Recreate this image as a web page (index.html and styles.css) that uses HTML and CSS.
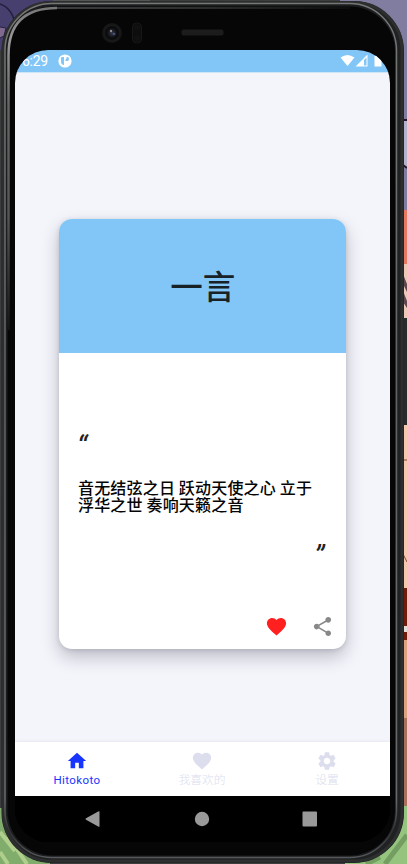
FILE: index.html
```html
<!DOCTYPE html>
<html lang="zh-CN">
<head>
<meta charset="utf-8">
<title>Hitokoto</title>
<link rel="stylesheet" href="styles.css">
</head>
<body>
<svg class="backdrop" width="407" height="864" viewBox="0 0 407 864" aria-hidden="true">
  <defs>
    <linearGradient id="rim" x1="0" y1="0" x2="0" y2="1">
      <stop offset="0" stop-color="#777"/><stop offset=".45" stop-color="#606364"/><stop offset=".93" stop-color="#686a6b"/><stop offset=".97" stop-color="#303133"/><stop offset="1" stop-color="#56585b"/>
    </linearGradient>
    <linearGradient id="shine" x1="0" y1="0" x2="0" y2="1">
      <stop offset="0" stop-color="#777"/><stop offset=".1" stop-color="#999"/><stop offset=".3" stop-color="#666"/><stop offset=".65" stop-color="#555"/><stop offset="1" stop-color="#151515"/>
    </linearGradient>
    <linearGradient id="top-shine" gradientUnits="userSpaceOnUse" x1="50" y1="0" x2="350" y2="0">
      <stop offset="0" stop-color="#777"/><stop offset=".5" stop-color="#555"/><stop offset="1" stop-color="#151515"/>
    </linearGradient>
    <radialGradient id="lens"><stop offset="0" stop-color="#34394b"/><stop offset=".35" stop-color="#18191e"/><stop offset=".6" stop-color="#080808"/><stop offset=".75" stop-color="#18191a"/><stop offset="1" stop-color="#141415"/></radialGradient>
  </defs>
  <rect width="407" height="864" fill="#3b3d3e"/>
  <path d="M0 0H53V50H0Z" fill="#47406f"/>
  <path d="M0 4C9 7 14 14 16 28" fill="none" stroke="#211f3b" stroke-width="1.5"/>
  <path d="M0 27L6 28L4 36L0 38" fill="#80698e" stroke="#25213c"/>
  <path d="M53 0H150V3H53Z" fill="#555"/>
  <path d="M340 0H407V210H340Z" fill="#817da0"/>
  <path d="M403 119H407V168L403 164Z" fill="#b3b1cc"/>
  <path d="M403 120H407M403 165L407 168" stroke="#29152a" stroke-width="2"/>
  <path d="M403 210H407V264H403Z" fill="#e77962"/>
  <path d="M403 264H407V318H403Z" fill="#efc7b6"/>
  <path d="M403 274L407 284V292L403 284ZM403 291L407 301V308L403 302Z" fill="#60464f"/>
  <path d="M403 318H407V425H403Z" fill="#292b2b"/>
  <path d="M403 425H407V588H403Z" fill="#f4c9ad"/>
  <path d="M403 460H407M403 554L407 562" stroke="#8b4538"/>
  <path d="M403 588H407V640H403Z" fill="#711d0b"/>
  <path d="M403 626H407V632H403Z" fill="#e7ddd8"/>
  <path d="M403 640H407V718H403Z" fill="#dda080"/>
  <path d="M403 718H407V807H403Z" fill="#a8715d"/>
  <path d="M0 808H50V864H0Z" fill="#80ad6c"/>
  <path d="M0 832L15 851M8 836L27 864M0 852L8 864" stroke="#b1cf8c" stroke-width="4"/>
  <path d="M345 806H407V864H345Z" fill="#94c47e"/>
  <path d="M385 864L407 835M366 864L380 857" stroke="#739d61" stroke-width="5"/>
  <rect x="1.500" y="1" width="402.500" height="862" rx="50" fill="#202122"/>
  <rect x="3.500" y="2.500" width="398.500" height="858.500" rx="48" fill="none" stroke="#2d2f2f" stroke-width="3"/>
  <rect x="5" y="3.500" width="391.500" height="854" rx="47" fill="#1b1c1e" stroke="url(#rim)" stroke-width="1.500"/>
  <rect x="7.500" y="6.500" width="387.500" height="849" rx="45" fill="#070607"/>
  <path d="M8.500 330V55Q8.500 8 57 8" fill="none" stroke="url(#shine)" stroke-width="2.500"/>
  <path d="M57 7.500H350V8.500H57Z" fill="url(#top-shine)"/>
  <circle cx="112" cy="33" r="10" fill="url(#lens)"/>
  <circle cx="111" cy="31" r="1.200" fill="#8c8e93"/><circle cx="114" cy="34" r="1.300" fill="#46527d"/>
  <rect x="132.500" y="23" width="9" height="20" rx="4" fill="#0d0d0e" stroke="#171717"/>
  <circle cx="137" cy="27.500" r="3" fill="#111"/><circle cx="137" cy="38" r="3" fill="#111"/>
  <rect x="181.500" y="29.500" width="42" height="6" rx="2" fill="#1c1c1d"/>
</svg>

<main class="screen">
  <header class="status">
    <span class="clock">6:29</span>
    <svg class="app-mark" viewBox="0 0 14 14"><circle cx="7" cy="7" r="6.600" fill="#fff"/><path d="M4.300 3H6V11H5.500Q3 10.500 3 8V4.300Q3 3 4.300 3ZM8.500 3H9.200Q11 3.200 11 5T9.200 7H7.500V5.500Q9 5.200 8.500 3Z" fill="#81c6f7"/></svg>
    <span class="grow"></span>
    <svg class="signals" width="50" height="14" viewBox="0 0 50 14" fill="#fff"><path d="M.5 3.400Q7.500-1.600 14.500 3.400L7.500 12Z"/><path fill-rule="evenodd" d="M27.500.5V12.500H15.500ZM26.500 3.500L24 6V11.500H26.500Z"/><path d="M34.500 2H36V.5H40V2H41.500V12.500H34.500Z"/></svg>
  </header>

  <section class="content">
    <article class="card">
      <h1 class="card-title">一言</h1>
      <div class="card-body">
        <div class="quote-open">“</div>
        <p class="sentence">音无结弦之日 跃动天使之心 立于<br>浮华之世 奏响天籁之音</p>
        <div class="quote-close">”</div>
        <div class="actions">
          <svg width="23" height="23" viewBox="0 0 24 24" fill="#ff201f"><path d="M12 21.350l-1.450-1.320C5.400 15.360 2 12.280 2 8.500 2 5.420 4.420 3 7.500 3c1.740 0 3.410.81 4.500 2.090C13.090 3.810 14.760 3 16.500 3 19.580 3 22 5.420 22 8.500c0 3.780-3.400 6.860-8.550 11.540z"/></svg>
          <svg width="23" height="23" viewBox="0 0 24 24" fill="#888"><path d="M18 16.080c-.76 0-1.440.3-1.960.77L8.910 12.700c.05-.23.09-.46.09-.7s-.04-.47-.09-.7l7.050-4.110c.54.5 1.250.81 2.040.81 1.660 0 3-1.340 3-3s-1.340-3-3-3-3 1.340-3 3c0 .24.040.47.090.7L8.040 9.810C7.500 9.310 6.790 9 6 9c-1.660 0-3 1.340-3 3s1.340 3 3 3c.79 0 1.500-.31 2.040-.81l7.120 4.160c-.05.21-.08.43-.08.65 0 1.610 1.310 2.920 2.920 2.920s2.920-1.310 2.920-2.920-1.310-2.920-2.920-2.920z"/></svg>
        </div>
      </div>
    </article>
  </section>

  <nav class="tabs">
    <div class="tab active">
      <svg viewBox="0 0 24 24"><path d="M10 20v-6h4v6h5v-8h3L12 3 2 12h3v8z"/></svg>
      <span>Hitokoto</span>
    </div>
    <div class="tab">
      <svg viewBox="0 0 24 24"><path d="M12 21.350l-1.450-1.320C5.400 15.360 2 12.280 2 8.500 2 5.420 4.420 3 7.500 3c1.740 0 3.410.81 4.500 2.090C13.090 3.810 14.760 3 16.500 3 19.580 3 22 5.420 22 8.500c0 3.780-3.400 6.860-8.550 11.540z"/></svg>
      <span>我喜欢的</span>
    </div>
    <div class="tab">
      <svg viewBox="0 0 24 24"><path d="M19.140 12.940c.04-.3.060-.61.060-.94 0-.32-.02-.64-.07-.94l2.030-1.580c.18-.14.23-.41.12-.61l-1.920-3.320c-.12-.22-.37-.29-.59-.22l-2.390.96c-.5-.38-1.030-.7-1.620-.94l-.36-2.540c-.04-.24-.24-.41-.48-.41h-3.840c-.24 0-.43.17-.47.41l-.36 2.540c-.59.24-1.130.57-1.620.94l-2.390-.96c-.22-.08-.47 0-.59.22L2.740 8.870c-.12.21-.08.47.12.61l2.030 1.580c-.05.3-.09.63-.09.94s.02.64.07.94l-2.030 1.580c-.18.14-.23.41-.12.61l1.920 3.320c.12.22.37.29.59.22l2.390-.96c.5.38 1.030.7 1.620.94l.36 2.540c.05.24.24.41.48.41h3.840c.24 0 .44-.17.47-.41l.36-2.540c.59-.24 1.130-.56 1.620-.94l2.390.96c.22.08.47 0 .59-.22l1.920-3.320c.12-.22.07-.47-.12-.61l-2.010-1.580zM12 15.600c-1.980 0-3.600-1.620-3.600-3.600s1.620-3.600 3.600-3.600 3.600 1.620 3.600 3.600-1.620 3.600-3.600 3.600z"/></svg>
      <span>设置</span>
    </div>
  </nav>

  <footer class="system-nav">
    <svg viewBox="0 0 16 16"><path d="M14.500.5V15.500Q14 16.200 13.200 15.500L1 8.700Q0 8 1 7.300L13.200.5Q14 0 14.500.5Z"/></svg>
    <svg viewBox="0 0 16 16"><circle cx="8" cy="8" r="7.200"/></svg>
    <svg viewBox="0 0 16 16"><rect x=".5" y=".6" width="14.500" height="14.800" rx="1"/></svg>
  </footer>
</main>
</body>
</html>
```

FILE: styles.css
```css
* { box-sizing: border-box; }
body {
  margin: 0;
  width: 407px;
  height: 864px;
  padding: 50px 17px 22px 15px;
  overflow: hidden;
  font-family: Roboto, "Noto Sans CJK SC", sans-serif;
}
.backdrop { position: absolute; inset: 0; z-index: -1; }
.screen {
  height: 792px;
  display: flex;
  flex-direction: column;
  overflow: hidden;
  border-radius: 33px;
  background: #000;
}
.status {
  height: 22px;
  flex: none;
  display: flex;
  align-items: center;
  padding-left: 7px;
  background: #81c6f7;
  color: #fff;
}
.clock { width: 36px; font-size: 14px; letter-spacing: -.3px; line-height: 22px; }
.app-mark { width: 14px; height: 14px; }
.grow { flex: 1; }
.content {
  height: 670px;
  flex: none;
  padding: 146px 44px 0;
  border-top: 1px solid #cfe5f8;
  background: #f4f5fb;
}
.card {
  height: 430px;
  width: 286.5px;
  border-radius: 13px;
  overflow: hidden;
  background: #fff;
  box-shadow: 0 8px 17px rgba(30, 32, 50, .26), 0 1px 5px rgba(30, 32, 50, .14);
}
.card-title {
  height: 134px;
  margin: 0;
  padding-left: 1px;
  text-align: center;
  font-size: 32.5px;
  line-height: 138px;
  font-weight: 500;
  color: #182126;
  background: #81c6f7;
}
.card-body {
  height: 296px;
  display: flex;
  flex-direction: column;
  padding: 75px 12px 11px 19px;
  color: #222;
}
.quote-open, .quote-close { height: 36px; font: italic 400 29px/38px Roboto, sans-serif; }
.quote-open { margin-left: -1px; }
.sentence {
  margin: 15px 0 0;
  font: 500 16px/17px "Noto Sans CJK SC", sans-serif;
  letter-spacing: .18px;
  white-space: nowrap;
  color: #050505;
}
.quote-close { margin-top: 24px; padding-right: 9px; text-align: right; }
.actions { display: flex; justify-content: flex-end; gap: 23px; margin-top: auto; }
.tabs {
  height: 54px;
  flex: none;
  display: grid;
  grid-template-columns: repeat(3, 1fr);
  background: #fff;
  box-shadow: 0 -1px 2px rgba(80, 80, 110, .07);
}
.tab {
  display: flex;
  flex-direction: column;
  align-items: center;
  padding: 8px 1px 0 0;
  color: #dcdeed;
  font-size: 11.8px;
  font-weight: 300;
  line-height: 17px;
}
.tab svg { width: 22px; height: 22px; fill: currentColor; }
.tab.active { color: #1735ff; font-size: 11.5px; font-weight: 400; letter-spacing: .4px; }
.system-nav {
  flex: 1;
  display: flex;
  justify-content: space-between;
  padding: 15px 72px 0 70px;
  background: #000;
}
.system-nav svg { width: 16px; height: 16px; fill: #999; }
```
